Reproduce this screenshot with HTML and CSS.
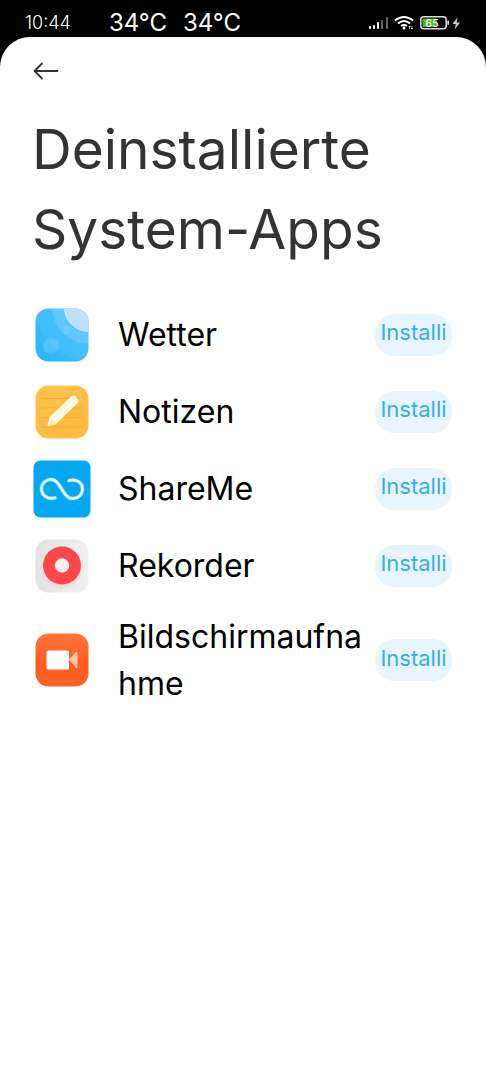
FILE: index.html
```html
<!DOCTYPE html>
<html lang="de">
<head>
<meta charset="utf-8">
<meta name="viewport" content="width=device-width, initial-scale=1">
<title>Deinstallierte System-Apps</title>
<link rel="stylesheet" href="styles.css">
</head>
<body>
<header class="status">
  <time class="clock">10:44</time>
  <span class="temp">34°C</span>
  <span class="temp">34°C</span>
  <svg class="status-icons" viewBox="0 0 94 20" aria-hidden="true">
    <g fill="#fff">
      <rect x="1" y="13" width="2" height="3" rx="1"/>
      <rect x="5" y="12" width="2" height="4" rx="1"/>
      <rect x="9" y="9" width="2" height="7" rx="1"/>
    </g>
    <g fill="#666">
      <rect x="13" y="7" width="2" height="9" rx="1"/>
      <rect x="18" y="4" width="2" height="12" rx="1"/>
    </g>
    <g fill="none" stroke="#fff" stroke-width="2">
      <path d="M27 7.500Q36 0.500 45 7.500"/>
      <path d="M30 10.500Q36 5.500 42 10.500"/>
      <path d="M33 13Q36 10.800 39 13"/>
    </g>
    <circle cx="36" cy="15" r="1.500" fill="#fff"/>
    <path d="M41.500 16v-3M40.500 14l1-1 1 1M44 13v3M43 15l1 1 1-1" fill="none" stroke="#ddd" stroke-width=".8"/>
    <rect x="52.800" y="3.800" width="25.400" height="12" rx="3" fill="none" stroke="#ddd" stroke-width="1.500"/>
    <rect x="54.500" y="5.500" width="14.500" height="8.600" rx="1" fill="#54b51c"/>
    <rect x="79.300" y="7.500" width="1.700" height="4.500" rx=".8" fill="#ddd"/>
    <text class="battery-text" x="64" y="14" text-anchor="middle">65</text>
    <path d="M89.500 4.300 84.500 11h3.200l-1 5.500 5.300-7h-3.400z" fill="#ccc"/>
  </svg>
</header>
<main class="sheet">
  <button class="back" type="button" aria-label="Zurück">
    <svg viewBox="0 0 26 18" aria-hidden="true"><path d="M24.500 9H2M9 1.500 1.500 9 9 16.500" fill="none" stroke="#333" stroke-width="1.800" stroke-linecap="round" stroke-linejoin="round"/></svg>
  </button>
  <h1 class="title">Deinstallierte System-Apps</h1>
  <ul class="apps">
    <li class="app">
      <svg class="icon" viewBox="0 0 58 58" aria-hidden="true">
        <defs>
          <linearGradient id="sky" x1="1" y1="0" x2="0" y2="1"><stop offset="0" stop-color="#4ebbff"/><stop offset="1" stop-color="#22b9ff"/></linearGradient>
          <linearGradient id="sun" x1="0" y1="1" x2="1" y2="0"><stop offset="0" stop-color="#b7dcfb"/><stop offset="1" stop-color="#d9eaf9"/></linearGradient>
          <clipPath id="tile"><rect x="2.500" y="2.500" width="53" height="53" rx="13"/></clipPath>
        </defs>
        <g clip-path="url(#tile)">
          <rect width="58" height="58" fill="url(#sky)"/>
          <circle cx="56" cy="1" r="54" fill="#fff" opacity=".06"/>
          <circle cx="56" cy="1" r="37" fill="#fff" opacity=".13"/>
          <circle cx="56" cy="1" r="24.500" fill="url(#sun)" stroke="#d8f1ff"/>
          <circle cx="18" cy="40" r="8" fill="#fff" opacity=".15"/>
          <circle cx="34" cy="24" r="4.500" fill="#fff" opacity=".1"/>
        </g>
      </svg>
      <span class="name">Wetter</span>
      <button class="install" type="button">Installi</button>
    </li>
    <li class="app">
      <svg class="icon" viewBox="0 0 58 58" aria-hidden="true">
        <defs>
          <linearGradient id="note" x1="0" y1="0" x2="0" y2="1"><stop offset="0" stop-color="#ffc14a"/><stop offset="1" stop-color="#ffbd3e"/></linearGradient>
          <linearGradient id="shade" x1="0" y1="0" x2="1" y2="1"><stop offset="0" stop-color="#f79b20" stop-opacity=".45"/><stop offset="1" stop-color="#ffb638" stop-opacity="0"/></linearGradient>
        </defs>
        <rect x="2.500" y="2.500" width="53" height="53" rx="13" fill="url(#note)"/>
        <path d="M9 15.500h40M9 25h40M9 34.500h40M9 44h40" stroke="#eda93a" stroke-width=".7"/>
        <path d="M15 44 46 18 55 27V43Q55 55 43 55H26z" fill="url(#shade)"/>
        <path d="M14.500 43.500 17 33.500 38.500 13.300Q40.500 11.600 42.300 13.300L45 16.500Q46.300 18.200 44.500 20L23 41z" fill="#fff9e8"/>
        <path d="M14.500 43.500 17 33.500 20 36z" fill="#fff"/>
        <path d="M14.500 43.500 23 41 19.800 36z" fill="#ffe9ae"/>
        <path d="M20 36 41 16" stroke="#fff1cd"/>
      </svg>
      <span class="name">Notizen</span>
      <button class="install" type="button">Installi</button>
    </li>
    <li class="app">
      <svg class="icon" viewBox="0 0 58 58" aria-hidden="true">
        <defs>
          <linearGradient id="loop" x1="8" y1="20" x2="49" y2="38" gradientUnits="userSpaceOnUse"><stop offset="0" stop-color="#c4edff"/><stop offset=".35" stop-color="#fff"/><stop offset=".7" stop-color="#e2f6ff"/><stop offset="1" stop-color="#fff"/></linearGradient>
        </defs>
        <rect x=".500" y=".500" width="57" height="57" rx="7" fill="#03a7f2"/>
        <path d="M22 37.800C14 40 8.500 35 8.500 29C8.500 23 13 19.500 18 19.500C28 19.500 29 38.500 40 38.500C45.500 38.500 49.500 34 49.500 29C49.500 23 44 18.500 36 20.500" fill="none" stroke="#64c9fa" stroke-width="4.200" stroke-linecap="round" opacity=".6"/>
        <path d="M22 37.800C14 40 8.500 35 8.500 29C8.500 23 13 19.500 18 19.500C28 19.500 29 38.500 40 38.500C45.500 38.500 49.500 34 49.500 29C49.500 23 44 18.500 36 20.500" fill="none" stroke="url(#loop)" stroke-width="2.800" stroke-linecap="round"/>
      </svg>
      <span class="name">ShareMe</span>
      <button class="install" type="button">Installi</button>
    </li>
    <li class="app">
      <svg class="icon" viewBox="0 0 58 58" aria-hidden="true">
        <defs>
          <linearGradient id="silver"><stop offset="0" stop-color="#e2e2e2"/><stop offset="1" stop-color="#f1f1f1"/></linearGradient>
          <radialGradient id="glow"><stop offset=".6" stop-color="#ff6b62" stop-opacity=".35"/><stop offset="1" stop-color="#ffd6d2" stop-opacity="0"/></radialGradient>
        </defs>
        <rect x="2.500" y="2.500" width="53" height="53" rx="13" fill="url(#silver)"/>
        <circle cx="29" cy="32" r="22" fill="url(#glow)"/>
        <circle cx="29" cy="28.500" r="19" fill="#ff474b"/>
        <circle cx="29" cy="28.500" r="7.200" fill="#f4eeee"/>
      </svg>
      <span class="name">Rekorder</span>
      <button class="install" type="button">Installi</button>
    </li>
    <li class="app">
      <svg class="icon" viewBox="0 0 58 58" aria-hidden="true">
        <defs>
          <linearGradient id="flame" x1="0" y1="0" x2="0" y2="1"><stop offset="0" stop-color="#ff7638"/><stop offset=".6" stop-color="#ff5c20"/><stop offset="1" stop-color="#fc6227"/></linearGradient>
        </defs>
        <rect x="2.500" y="2.500" width="53" height="53" rx="13" fill="url(#flame)"/>
        <path d="M36 28.500 42.500 21.500Q44 20.500 44.500 22V36Q44 38 42.500 36.500z" fill="#ffc3a8"/>
        <rect x="13.500" y="19.500" width="22.500" height="19" rx="1.500" fill="#fff"/>
      </svg>
      <span class="name">Bildschirmaufnahme</span>
      <button class="install" type="button">Installi</button>
    </li>
  </ul>
</main>
</body>
</html>
```
FILE: styles.css
```css
* {
  box-sizing: border-box;
}

body {
  margin: 0;
  min-height: 100vh;
  display: flex;
  flex-direction: column;
  background: #000;
  color: #000;
  font-family: Inter, "Open Sans", sans-serif;
}

button {
  border: 0;
  padding: 0;
  font: inherit;
  cursor: pointer;
}

.status {
  display: flex;
  align-items: center;
  gap: 16px;
  height: 37px;
  padding: 8px 24px 0 25px;
  color: #fff;
}

.clock {
  margin-right: 22px;
  font-size: 18px;
  font-weight: 300;
}

.temp {
  font-size: 24px;
}

.status-icons {
  width: 94px;
  height: 20px;
  margin-left: auto;
}

.battery-text {
  fill: #fff;
  font-size: 11px;
}

.sheet {
  flex: 1;
  padding: 24px 32px;
  background: #fff;
  border-radius: 30px 30px 0 0;
}

.back {
  display: block;
  width: 28px;
  height: 20px;
  background: none;
}

.back svg {
  display: block;
  width: 26px;
  height: 20px;
  margin-left: 1px;
}

.title {
  margin: 28px 0 27px;
  color: #333;
  font-size: 55px;
  font-weight: 400;
  line-height: 80px;
}

.apps {
  margin: 0;
  padding: 0;
  list-style: none;
}

.app {
  display: flex;
  align-items: center;
  min-height: 77px;
  padding: 9px 2px 9px 1px;
}

.icon {
  flex: none;
  width: 58px;
  height: 58px;
}

.name {
  flex: 1;
  min-width: 0;
  margin: 0 4px 0 27px;
  font-size: 32px;
  line-height: 47px;
  word-break: break-all;
}

.install {
  flex: none;
  width: 77px;
  height: 42px;
  padding-bottom: 5px;
  overflow: hidden;
  border-radius: 20px;
  background: #e8f4fe;
  color: #35aee6;
  font-size: 22px;
  line-height: 36px;
}
```
